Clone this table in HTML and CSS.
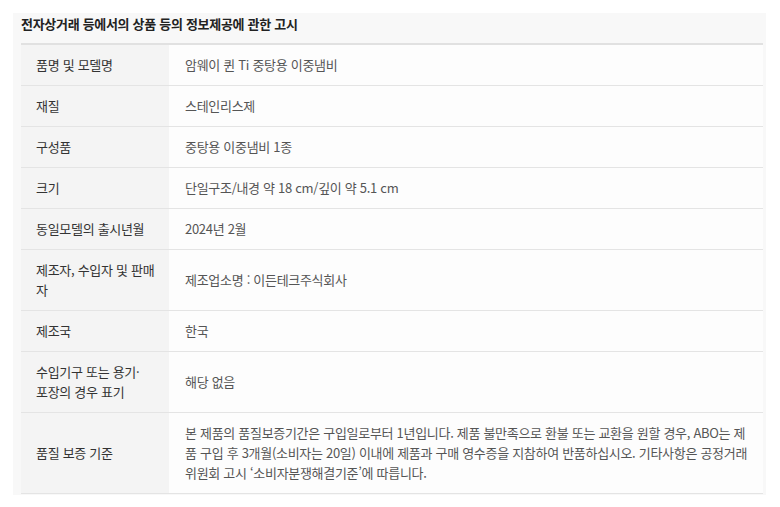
FILE: index.html
```html
<!DOCTYPE html>
<html lang="ko">
<head>
<meta charset="utf-8">
<link rel="stylesheet" href="styles.css">
</head>
<body>
<section class="panel">
  <h2 class="title">전자상거래 등에서의 상품 등의 정보제공에 관한 고시</h2>
  <table class="info">
    <tbody>
      <tr><th>품명 및 모델명</th><td>암웨이 퀸 Ti 중탕용 이중냄비</td></tr>
      <tr><th>재질</th><td>스테인리스제</td></tr>
      <tr><th>구성품</th><td>중탕용 이중냄비 1종</td></tr>
      <tr><th>크기</th><td>단일구조/내경 약 18 cm/깊이 약 5.1 cm</td></tr>
      <tr><th>동일모델의 출시년월</th><td>2024년 2월</td></tr>
      <tr><th>제조자, 수입자 및 판매<br>자</th><td>제조업소명 : 이든테크주식회사</td></tr>
      <tr><th>제조국</th><td>한국</td></tr>
      <tr><th>수입기구 또는 용기·<br>포장의 경우 표기</th><td>해당 없음</td></tr>
      <tr><th>품질 보증 기준</th><td>본 제품의 품질보증기간은 구입일로부터 1년입니다. 제품 불만족으로 환불 또는 교환을 원할 경우, ABO는 제<br>품 구입 후 3개월(소비자는 20일) 이내에 제품과 구매 영수증을 지참하여 반품하십시오. 기타사항은 공정거래<br>위원회 고시 ‘소비자분쟁해결기준’에 따릅니다.</td></tr>
    </tbody>
  </table>
</section>
</body>
</html>
```
FILE: styles.css
```css
html, body {
  margin: 0;
  padding: 0;
  background: #ffffff;
}
body {
  padding: 13px 14px 0 13px;
  font-family: "Noto Sans CJK KR", "Noto Sans", sans-serif;
  font-size: 13px;
  color: #555;
}
.panel {
  background: #f8f8f8;
  padding: 0 3px 1px 8px;
}
.title {
  margin: 0 0 8px 0;
  font-size: 13px;
  line-height: 22px;
  font-weight: 700;
  color: #222;
  letter-spacing: -0.3px;
}
.info {
  width: 100%;
  border-collapse: collapse;
  border-top: 2px solid #e1e1e1;
  background: #fdfdfd;
}
.info th,
.info td {
  border-bottom: 1px solid #e4e4e4;
  padding: 10px 16px;
  line-height: 20px;
  text-align: left;
  vertical-align: middle;
  letter-spacing: -0.3px;
}
.info th {
  width: 127px;
  padding-left: 15px;
  padding-right: 6px;
  white-space: nowrap;
  background: #f4f4f4;
  font-weight: 400;
  color: #333;
}
.info td {
  padding-right: 6px;
  white-space: nowrap;
  color: #555;
}
```
